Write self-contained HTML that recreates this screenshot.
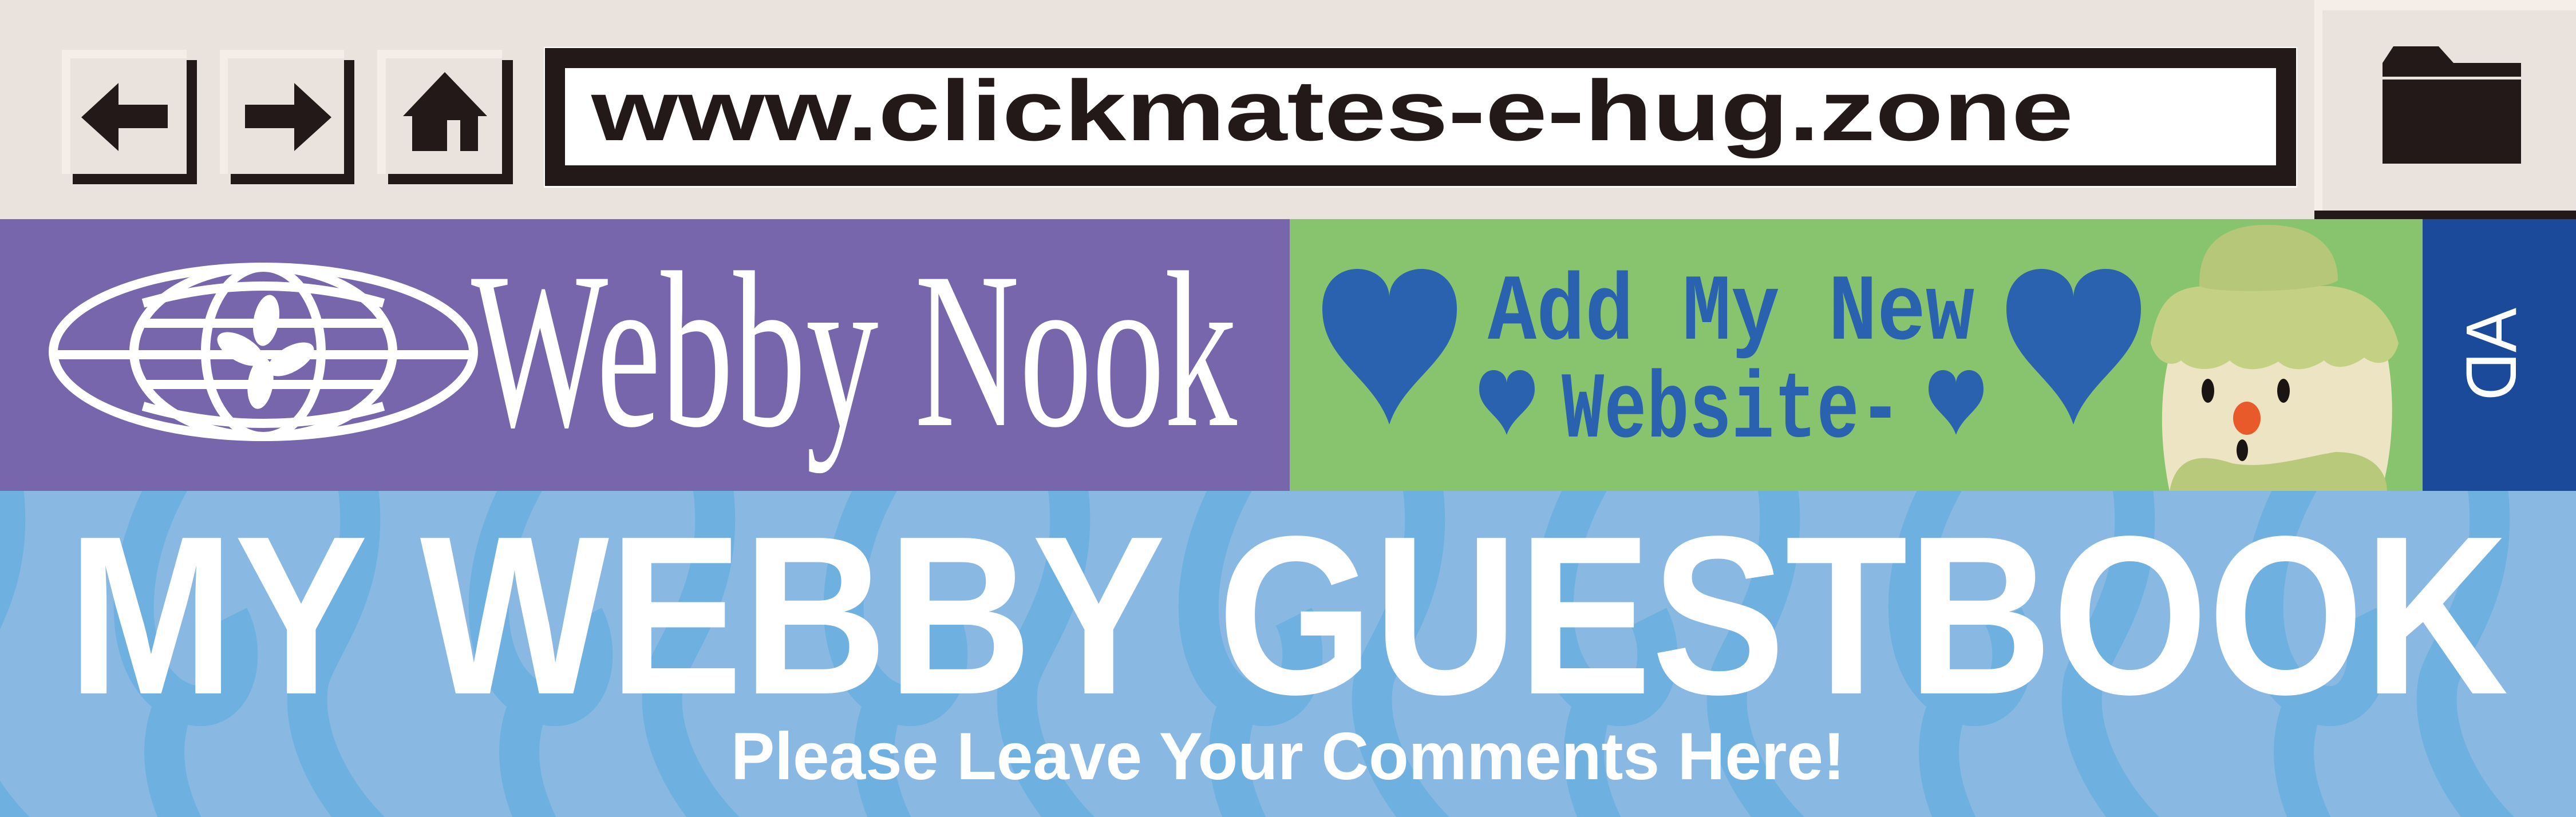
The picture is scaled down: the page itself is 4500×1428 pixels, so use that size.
<!DOCTYPE html>
<html><head><meta charset="utf-8"><style>
html,body{margin:0;padding:0;width:4500px;height:1428px;overflow:hidden;background:#eae2dd}
svg{display:block}
</style></head><body>
<svg width="4500" height="1428" viewBox="0 0 4500 1428" xmlns="http://www.w3.org/2000/svg">
<defs>
<pattern id="sw" x="-120" y="858" width="620" height="600" patternUnits="userSpaceOnUse">
<path d="M120,-40 C160,160 60,260 40,330 C20,430 90,560 200,640" fill="none" stroke="#6eb0e0" stroke-width="70"/>
<path d="M430,-40 C330,120 330,300 420,360 C520,420 560,300 520,220" fill="none" stroke="#6eb0e0" stroke-width="70"/>
<path d="M430,360 C380,460 420,560 470,640" fill="none" stroke="#6eb0e0" stroke-width="70"/>
</pattern>
</defs>
<rect x="0" y="0" width="4500" height="383" fill="#eae2dd"/>
<g>
<rect x="127" y="105" width="217" height="217" fill="#231918"/>
<rect x="108" y="87" width="218" height="217" fill="#f5ede8"/>
<rect x="123" y="102" width="203" height="202" fill="#eae2dd"/>
<polygon points="142,205 207,145 207,183 293,183 293,224 207,224 207,264" fill="#231918"/>
</g>
<g>
<rect x="403" y="105" width="216" height="217" fill="#231918"/>
<rect x="384" y="87" width="217" height="217" fill="#f5ede8"/>
<rect x="398" y="102" width="203" height="202" fill="#eae2dd"/>
<polygon points="579,205 514,145 514,183 428,183 428,224 514,224 514,264" fill="#231918"/>
</g>
<g>
<rect x="678" y="105" width="218" height="217" fill="#231918"/>
<rect x="659" y="87" width="218" height="217" fill="#f5ede8"/>
<rect x="674" y="102" width="203" height="202" fill="#eae2dd"/>
<polygon points="777,126 704,203 720,203 720,264 781,264 781,210 804,210 804,264 835,264 835,203 851,203" fill="#231918"/>
</g>
<rect x="950" y="82" width="3063" height="246" fill="#fff"/>
<rect x="952" y="84" width="3059" height="241" fill="#231918"/>
<rect x="987" y="119" width="2989" height="170" fill="#fff"/>
<text x="1033" y="245" font-family="Liberation Sans, sans-serif" font-weight="bold" font-size="150" textLength="2589" lengthAdjust="spacingAndGlyphs" fill="#231918">www.clickmates-e-hug.zone</text>
<rect x="4043" y="0" width="457" height="383" fill="#f5ede8"/>
<rect x="4057" y="18" width="443" height="350" fill="#eae2dd"/>
<rect x="4043" y="368" width="457" height="15" fill="#231918"/>
<polygon points="4162,110 4181,81 4260,81 4286,110 4404,110 4404,134 4162,134" fill="#231918"/>
<rect x="4162" y="139" width="242" height="147" fill="#231918"/>
<rect x="0" y="383" width="2253" height="476" fill="#7766ab"/>
<g fill="none" stroke="#fff" stroke-width="16">
<ellipse cx="460" cy="615" rx="367" ry="148"/>
<ellipse cx="460" cy="615" rx="226" ry="148"/>
<ellipse cx="460" cy="615" rx="101" ry="148"/>
<path d="M93,620 H827"/>
<path d="M250,565 H670 M250,672 H670"/>
<path d="M250,530 Q460,470 670,530 M250,710 Q460,770 670,710"/>
</g>
<g fill="#fff">
<ellipse cx="465" cy="560" rx="22" ry="45" transform="rotate(10 465 560)"/>
<ellipse cx="420" cy="610" rx="22" ry="45" transform="rotate(-60 420 610)"/>
<ellipse cx="508" cy="628" rx="22" ry="45" transform="rotate(60 508 628)"/>
<ellipse cx="455" cy="670" rx="22" ry="45" transform="rotate(8 455 670)"/>
</g>
<text x="823" y="743" font-family="Liberation Serif, serif" font-size="390" textLength="1338" lengthAdjust="spacingAndGlyphs" fill="#fff">Webby Nook</text>
<rect x="2253" y="383" width="1980" height="476" fill="#88c46e"/>
<g fill="#2a62b0">
<path d="M2427,520 C2427,455 2310,445 2310,540 C2310,630 2400,660 2427,742 C2454,660 2545,630 2545,540 C2545,445 2427,455 2427,520Z"/>
<path d="M3622,520 C3622,455 3505,445 3505,540 C3505,630 3595,660 3622,742 C3649,660 3740,630 3740,540 C3740,445 3622,455 3622,520Z"/>
<path d="M2632,670 C2632,640 2584,635 2584,680 C2584,715 2620,725 2632,760 C2644,725 2681,715 2681,680 C2681,635 2632,640 2632,670Z"/>
<path d="M3417,670 C3417,640 3369,635 3369,680 C3369,715 3405,725 3417,760 C3429,725 3465,715 3465,680 C3465,635 3417,640 3417,670Z"/>
</g>
<text x="2599" y="592" font-family="Liberation Mono, monospace" font-weight="bold" font-size="165" textLength="850" lengthAdjust="spacingAndGlyphs" fill="#2a62b0">Add My New</text>
<text x="2728" y="763" font-family="Liberation Mono, monospace" font-weight="bold" font-size="165" textLength="594" lengthAdjust="spacingAndGlyphs" fill="#2a62b0">Website-</text>
<g>
<path d="M3790,859 C3770,760 3775,680 3790,620 L4170,620 C4185,700 4180,790 4160,859Z" fill="#ece4c2"/>
<path d="M3757,600 C3770,520 3800,500 3860,500 L4070,500 C4130,505 4175,540 4190,600 C4180,640 4150,640 4130,625 C4110,640 4080,650 4060,630 C4030,650 4000,650 3980,632 C3950,650 3915,650 3895,630 C3870,650 3830,650 3810,630 C3790,645 3765,630 3757,600Z" fill="#c4d184"/>
<path d="M3842,500 C3840,430 3880,393 3960,393 C4040,393 4084,430 4084,490 C4060,510 3870,515 3842,500Z" fill="#b6c77a"/>
<path d="M3790,859 C3800,800 3840,790 3900,810 C3960,820 4020,800 4080,790 C4140,790 4170,820 4170,859Z" fill="#b9c97c"/>
<ellipse cx="3857" cy="683" rx="11" ry="21" fill="#1a1412"/>
<ellipse cx="3989" cy="683" rx="11" ry="21" fill="#1a1412"/>
<ellipse cx="3925" cy="731" rx="24" ry="29" fill="#e85a2a"/>
<ellipse cx="3917" cy="787" rx="10" ry="19" fill="#1a1412"/>
</g>
<rect x="4232" y="383" width="268" height="476" fill="#1b4a9a"/>
<text transform="matrix(0,1,1,0,4305,538)" x="0" y="90" font-family="Liberation Sans, sans-serif" font-size="125" textLength="162" lengthAdjust="spacingAndGlyphs" fill="#fff">AD</text>
<rect x="0" y="858" width="4500" height="570" fill="#89b9e3"/>
<rect x="0" y="858" width="4500" height="570" fill="url(#sw)"/>
<text x="118" y="1212" font-family="Liberation Sans, sans-serif" font-weight="bold" font-size="395" textLength="4264" lengthAdjust="spacingAndGlyphs" fill="#fff">MY WEBBY GUESTBOOK</text>
<text x="1277" y="1362" font-family="Liberation Sans, sans-serif" font-weight="bold" font-size="117" textLength="1946" lengthAdjust="spacingAndGlyphs" fill="#fff">Please Leave Your Comments Here!</text>
</svg>
</body></html>
